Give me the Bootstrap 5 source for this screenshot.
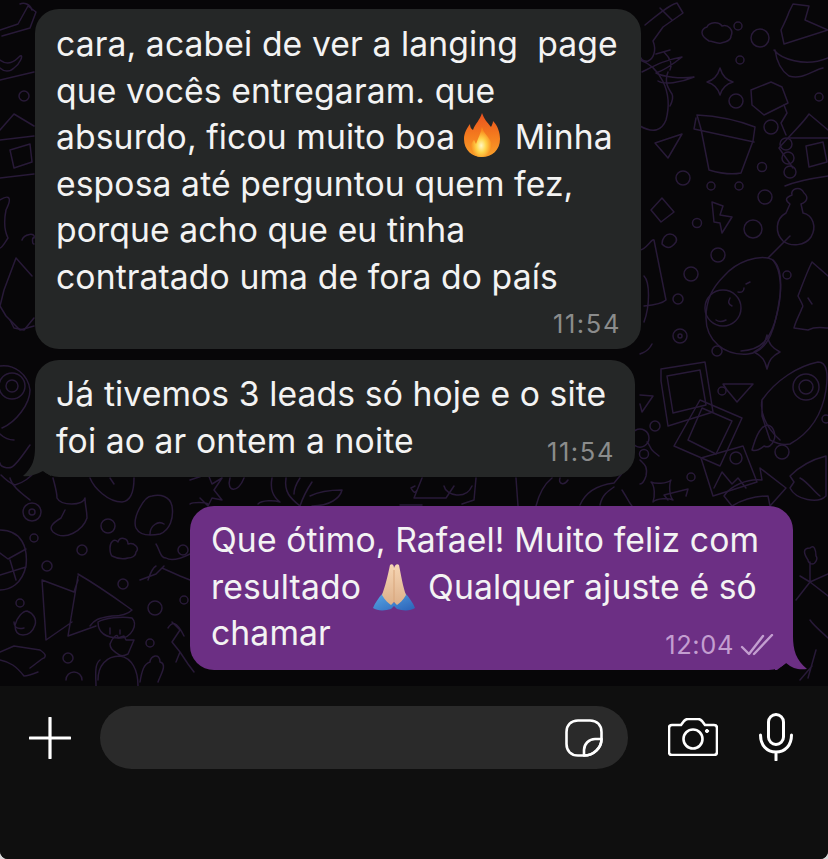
<!DOCTYPE html>
<html lang="pt-BR">
<head>
<meta charset="utf-8">
<title>Conversa</title>
<link href="https://cdn.jsdelivr.net/npm/bootstrap@5.3.0/dist/css/bootstrap.min.css" rel="stylesheet">
<style>
html,body{height:859px;overflow:hidden;background:#d8d8d8;}
.wa-app{width:828px;height:859px;background:#070608;border-radius:0 0 8px 8px;overflow:hidden;font-family:Inter,"Liberation Sans",sans-serif;}
.wa-chat{height:686px;position:relative;padding-top:9px;}
.wa-doodle{position:absolute;left:0;top:0;width:828px;height:686px;fill:none;stroke:#281a38;stroke-width:1.5;stroke-linejoin:round;stroke-linecap:round;}
.wa-bubble{position:relative;color:#f3f3f3;font-size:33.7px;line-height:46.6px;letter-spacing:.1px;white-space:pre;border-radius:24px;}
.wa-in{background:#252727;margin-left:35px;padding-left:21px;}
.wa-one{width:606px;height:340px;padding-top:12px;}
.wa-two{width:600px;height:117px;margin-top:11px;padding-top:11px;}
.wa-out{background:#6c2f84;margin-left:190px;margin-top:29px;width:603px;height:164px;padding-left:21px;padding-top:11px;}
.wa-time{position:absolute;font-size:25.5px;line-height:28px;letter-spacing:1.6px;color:#8b8c8c;}
.wa-one .wa-time{right:20px;bottom:11px;}
.wa-two .wa-time{right:20px;bottom:11px;}
.wa-out .wa-time{right:59px;bottom:11px;color:#c39ed0;letter-spacing:.6px;}
.wa-checks{position:absolute;right:19px;bottom:14px;}
.wa-tail{position:absolute;bottom:0;}
.wa-tail-l{left:-12px;}
.wa-tail-r{right:-14px;}
.wa-fire{vertical-align:4px;margin:-12px 5px -12px 9px;}
.wa-hands{vertical-align:0;margin:-12px 3px -12px 2px;}
.wa-bar{height:173px;background:#0f0f0f;padding:20px 0 0 29px;}
.wa-pill{width:528px;height:63px;background:#2a2a2a;border-radius:32px;margin-left:29px;padding:13px 25px 0 0;}
.wa-plus{margin-top:11px;}
.wa-cam{margin-left:40px;margin-top:12px;}
.wa-mic{margin-left:41px;margin-top:7px;}
.wa-ico{fill:none;stroke:#fff;stroke-linecap:round;stroke-linejoin:round;flex:none;display:block;}
</style>
</head>
<body class="m-0">
<div class="wa-app d-flex flex-column">
  <div class="wa-chat">
    <svg class="wa-doodle" viewBox="0 0 828 686" aria-hidden="true">
      <g>
        <circle cx="738" cy="26" r="4"/><circle cx="760" cy="38" r="9"/><circle cx="740" cy="60" r="4"/><circle cx="736" cy="101" r="7"/><circle cx="771" cy="127" r="7"/><circle cx="819" cy="97" r="4"/><circle cx="762" cy="167" r="4.5"/><circle cx="683" cy="178" r="7"/><circle cx="711" cy="186" r="4"/><circle cx="739" cy="186" r="4"/><circle cx="765" cy="197" r="7"/><circle cx="697" cy="223" r="4.5"/><circle cx="753" cy="229" r="9"/>
        <circle cx="718" cy="255" r="7"/><circle cx="691" cy="274" r="7"/><circle cx="678" cy="299" r="5"/><circle cx="680" cy="336" r="7"/><circle cx="680" cy="336" r="2"/><circle cx="717" cy="351" r="5"/><circle cx="787" cy="275" r="4"/><circle cx="722" cy="391" r="4"/><circle cx="655" cy="426" r="5"/><circle cx="644" cy="454" r="4.5"/><circle cx="691" cy="477" r="4"/><circle cx="782" cy="452" r="7"/><circle cx="826" cy="419" r="4"/>
        <circle cx="32" cy="512" r="9"/><circle cx="32" cy="512" r="3"/><circle cx="108" cy="526" r="7"/><circle cx="34" cy="538" r="4"/><circle cx="82" cy="550" r="5"/><circle cx="47" cy="566" r="5"/><circle cx="123" cy="584" r="5"/><circle cx="20" cy="603" r="4"/><circle cx="155" cy="608" r="7"/><circle cx="183" cy="550" r="5"/><circle cx="184" cy="600" r="4"/><circle cx="150" cy="643" r="4"/><circle cx="68" cy="658" r="5"/>
        <circle cx="12" cy="386" r="13"/><circle cx="12" cy="386" r="6"/><circle cx="24" cy="96" r="5"/>
      </g>
      <path d="M645 25c12-10 24-20 32-22l6 10-20 14-10 14c4 10 0 18-5 20-5 1-8-2-8-6"/>
      <path d="M660 8l12 12M670 50l-14 4"/>
      <path d="M664 52c8 8 8 14 6 18M642 72c12-6 22-12 40-15-10 8-20 14-26 16 8 4 24 6 38 4-14 6-30 8-36 4"/>
      <path d="M640 60c18 6 34 30 26 60-4 10-12 14-26 6"/>
      <path d="M668 72c-4 10 0 16 4 22 2 4 0 8-2 12"/>
      <path d="M715 44c-10-6-8-12-2-14 2-5 12-6 15-1 6-2 12 4 9 10 0 5-6 6-10 7-5 1-8-2-12-2z" transform="translate(-6 -3)"/>
      <path d="M720 68c2 7 6 12 13 14-7 2-11 6-13 13-2-7-6-11-13-13 7-2 11-7 13-14z"/>
      <path d="M756 90l20-8 11 5 6 16-24 12-12-10z" transform="translate(-5 0)"/>
      <path d="M697 115c20 1 40 5 58 12l-2 14-12 32c-10 2-22 0-32-3l-8-41z M696 118l-2 11 60 13"/>
      <path d="M655 143l27-9-14 24z"/>
      <path d="M781 30c4-8 6-12 8-18l4-8 16 2-4 14 23 10-44 14z"/>
      <path d="M775 50c2 14 8 22 14 26 14 4 24-6 34-8 M774 50c6 8 30 18 54 8"/>
      <path d="M779 148c14-16 25-26 30-34l19 16M786 135l-5-12 6-10-3-8M779 148l14 20 M790 138h38 M785 186c14-6 29-8 43-10"/>
      <circle cx="786" cy="144" r="6"/><circle cx="788" cy="158" r="6"/><circle cx="790" cy="172" r="6"/>
      <path d="M806 146l17-4 4 20-18 5z"/>
      <path d="M662 198l12 14-13 10-10-12z"/>
      <path d="M712 202l11 4-3 9 12 2-10 16-2-10-6-1z"/>
      <path d="M792 195c-2-6 8-10 12-2 5 4 3 9-3 11l2 9c10 2 14 14 8 24-6 9-20 10-28 4-8-8-8-22 3-28l4-9c-4-3-6-6 2-9z"/>
      <path d="M640 250c6 0 12-12 14-10l12 60c-3 3-12 5-22 6M644 276c6 6 6 30 0 46"/>
      <path d="M662 244c4 4 8 6 14-2 2-4-2-8-6-8-4 0-8 4-8 10z"/>
      <path d="M768 258c-10-2-30 2-44 18-12 12-18 24-18 42 0 22 18 38 42 36 22-2 28-30 32-58 2-18 0-36-12-38z"/>
      <path d="M773 260c8 10 10 30 4 54-6 26-16 36-36 37"/>
      <circle cx="723" cy="308" r="18"/><path d="M730 298c-2 4-2 6 2 8M716 320c3 2 6 2 10 0M738 292c4 1 6-1 6-4M746 284l4-2"/>
      <path d="M768 258l22-22"/>
      <path d="M812 262c-6 12-10 24-14 34 4 8 6 10 4 12-2 6-6 12-8 20l14 2c8-4 14-2 20-2M812 262l16 14M808 298l4 6"/>
      <path d="M767 335c2 9 5 13 13 17-8 4-11 8-13 17-2-9-5-13-13-17 8-4 11-8 13-17z"/>
      <path d="M640 354c4-2 8-2 12-10M640 395l13 1-11 16-2-8"/>
      <path d="M661 369l44-7 8 50-45 14-7-45z M667 376l33-6 6 35-33 8z"/>
      <path d="M700 400l42 18-22 48-46-20z M702 408l30 13-16 33-28-14z"/>
      <path d="M730 382l-4-6 30 0-16 18z" transform="translate(-3 8)"/>
      <path d="M701 458c14-4 28-8 42-12l14 36-44 14z"/>
      <circle cx="736" cy="458" r="6"/><path d="M714 488l8-16 10 12 6-6 8 10"/>
      <path d="M724 496c6-10 24-18 38-16l-2-12 26 20-16 18-2-10c-14 0-26 4-36 10z"/>
      <path d="M762 400c14-20 36-34 56-38 10 0 10 14 8 28-4 26-18 44-36 54-10 2-16-2-20-4l-8-24z M762 400c-2 10 2 26 18 40"/>
      <circle cx="806" cy="387" r="13"/><circle cx="806" cy="387" r="7"/>
      <path d="M762 428c-6 6-8 16-10 22 4 2 10-2 12-4 4 2 8 0 10-6 2-4 0-12-4-14-2-2-6 0-8 2z"/>
      <path d="M790 476c8-8 20-16 36-20v40c-8 8-30 4-36-8l4-6z M800 478c8 4 14 14 20 18"/>
      <path d="M647 442c3 2 2 6 7 10l5 4 M649 438a9 9 0 1 0 0 .1"/>
      <path d="M651 482c4 2 16 2 20-2-2 4-2 16 2 20-4-2-16-2-20 2 2-6 2-16-2-20z"/>
      <path d="M668 500l-4-5 24-6-2 7"/>
      <path d="M0 30l18-6 10-18 8 6-6 16-28 8M20 4c4-2 10 0 12 6"/>
      <path d="M0 60c8 6 14 2 20-4 4-2 0 8-6 12-4 4-10 4-14 0M0 80l34-8"/>
      <path d="M0 130l14-16 20 12M0 140l34-4M10 150l20-6 2 18-18 6zM0 178l34-4"/>
      <path d="M0 200c6-4 14-6 6 10-2 10-2 20 2 28-4 6-6 10-8 10M22 240c2-6 14-8 12-2-2-2-2 6 0 6"/>
      <path d="M16 258l-12 32-4 16 6 10 14 14 14-4M16 258l16 18"/>
      <path d="M34 318l-10 12-10-2-4-8"/>
      <path d="M0 366c14-2 28 8 30 24 0 14-14 32-28 38"/>
      <path d="M30 445c-6 8-12 18-18 22-4 2-12 0-12-4M0 434c4 4 10 6 14 6M10 478c2 8 10 14 20 22"/>
      <path d="M35 471c-4 6-12 12-20 14-6-2-10-6-14-10"/>
      <path d="M53 478c2 8 4 14 4 20 4 8 26 8 28 0 0 8 2 12 2 20-4 12-22 24-34 14-4-4-2-8 8-14l4-8"/>
      <path d="M90 478c4 10 18 24 32 24 10-1 12-12 12-24M110 478l4 6"/>
      <path d="M152 496c8-2 18 0 20 10 2 12-2 24-12 28-10 2-20 2-24-6-4-10 8-32 16-32z M150 534c0-8 8-14 14-10"/>
      <path d="M110 548c0-6 4-10 8-6 2-6 10-4 10 2 6-2 12 4 8 8 0 4-4 6-8 6-6 2-12 0-16-2-2-2-2-6-2-8z"/>
      <path d="M156 544c4 6 4 14 10 14 6 4 16 0 24-4M148 580c2-6 4-12 8-14M140 580l16-6 8-8M162 568l18 8 10 4"/>
      <path d="M0 530c22 0 28 18 26 36-4 18-16 24-26 24M0 553l8 6 18-10M10 560l6 20M0 575l26-8"/>
      <path d="M42 580l32 12 4-12M42 580l4 60 26-18 M78 576l-10 60 28-10 M78 574c24 14 40 26 54 36-4 4-10 6-20 6-14 2-18 4-22 10M98 622c6-4 24-6 34-4 6 6 0 20-12 20-10 0-22-2-22-16z M110 628v6M120 630v4"/>
      <path d="M15 625c2-8 8-14 12-14 6 2 10 8 8 14-2 6-6 10-12 10-6 0-8-4-8-10z M14 622c0 4 2 8 10 6"/>
      <path d="M0 652l14-6 26 4c6 4 6 6 4 8-2 0-8 6-14 10M0 660c10 2 16 6 24 16 2 0 4 0 14-4"/>
      <path d="M98 680c0-14 8-24 22-24 12 2 18 14 18 30M110 644c2-6 8-12 8-6l6-2 2 4 8 0-6 14c-4 2-8 2-10 0-6-4-8-6-8-10zM100 660c-6 4-4 18-4 26"/>
      <path d="M140 682c2-12 4-18 10-20 0-6 10-10 10 0 8 2 0 14-2 20M66 680a8 8 0 0 1 16 0"/>
      <path d="M172 622l8 8-8 12 8 10-4 10M168 628c4-6 8-8 16 8M180 652l8 12 6 8"/>
      <path d="M190 480l18-6 4 10 10-6-8 12 8 10-10-2-4 8-8-8M190 504c2-2 16-2 18 0M230 478c-4 14 8 16 14 0"/>
      <path d="M272 478c-2 10 0 18 8 24-6-2-18-2-22 2M286 478c-2 14 4 20 14 28 4-12 8-18 12-24 M300 478c-4 6-6 12-6 16M310 496c8-4 22-6 32-6-2 8-12 16-30 16"/>
      <path d="M415 486l-4 2c2 4 4 6 6 2 M422 478l-8 20h32l8-12 M444 486c2 10 22 14 28 0 M400 505h22M476 478l-2 22-12 4 M516 478l2 28M552 478c-10 8-14 20-16 28 M560 478c-2 6 4 8 8 2 M580 505c6-14 18-20 34-22l10-12M622 490c4 6 8 14 10 16 M600 505c2-10 8-14 14-18"/>
      <path d="M640 460c4 4 8 6 6 16-2 6-4 8-6 8"/>
      <path d="M808 560c-4-6-6-12 2-12 4-4 6 2 6 8 2 2 0 8-4 8-2 0-4-2-4-4z M810 562v20M796 600l14-18 18 14M810 582l-10-6M810 582l18-8"/>
      <path d="M810 620c4 6 14 14 18 18M816 650l-8 28M800 680l12-14"/>
    </svg>

    <div class="wa-bubble wa-in wa-one">cara, acabei de ver a langing  page
que vocês entregaram. que
absurdo, ficou muito boa<svg class="wa-fire" width="36" height="44" viewBox="0 0 36 44" aria-hidden="true"><defs><linearGradient id="wf" x1="0" y1="0" x2="0" y2="1"><stop offset="0" stop-color="#e8501f"/><stop offset=".5" stop-color="#f47a1e"/><stop offset="1" stop-color="#f9a02a"/></linearGradient><radialGradient id="wg" cx=".5" cy=".62" r=".5"><stop offset="0" stop-color="#fff6c4"/><stop offset=".45" stop-color="#ffd64d"/><stop offset="1" stop-color="#f98a1c"/></radialGradient></defs><path fill="url(#wf)" d="M18 0c2 6 5 9 9 14 1-2 2-4 2-6 5 5 7 12 7 18 0 11-8 18-18 18S0 37 0 26c0-6 3-11 6-15 0 3 1 5 3 6 2-6 7-10 9-17z"/><path fill="url(#wg)" d="M18 14c1 5 5 8 8 13 2 3 2 6 1 9-2 5-6 8-10 8s-9-3-10-8c-1-4 1-7 3-9 1 1 1 3 2 4 2-6 5-11 6-17z"/></svg> Minha
esposa até perguntou quem fez,
porque acho que eu tinha
contratado uma de fora do país<span class="wa-time">11:54</span></div>

    <div class="wa-bubble wa-in wa-two">Já tivemos 3 leads só hoje e o site
foi ao ar ontem a noite<span class="wa-time">11:54</span><svg class="wa-tail wa-tail-l" width="28" height="30" viewBox="0 0 28 30" aria-hidden="true"><path fill="#252727" d="M12 0c0 12-2 20-12 29 6 1 12-1 20-5l8 5V0z"/></svg></div>

    <div class="wa-bubble wa-out">Que ótimo, Rafael! Muito feliz com
resultado <svg class="wa-hands" width="43" height="47" viewBox="0 0 43 47" aria-hidden="true"><defs><linearGradient id="wh" x1="0" y1="0" x2="0" y2="1"><stop offset="0" stop-color="#f7d6b4"/><stop offset="1" stop-color="#dcb08a"/></linearGradient><linearGradient id="ws" x1="0" y1="0" x2="1" y2="1"><stop offset="0" stop-color="#5aa8e6"/><stop offset="1" stop-color="#2a62b8"/></linearGradient></defs><path fill="url(#ws)" d="M10 29c-4 4-8 10-10 15 4 3 12 3 18 1l3-3 3 3c6 2 14 2 18-1-2-5-6-11-10-15l-6 6-5 4-5-4z"/><path fill="url(#wh)" d="M17 1c2-2 4 0 4 3v34l-3 3c-3-2-6-5-9-10 3-8 6-20 8-30z"/><path fill="url(#wh)" d="M26 1c-2-2-4 0-5 3v34l3 3c3-2 6-5 9-10-3-8-5-20-7-30z"/><path stroke="#d9a67c" stroke-width="1" d="M21 6v32"/></svg> Qualquer ajuste é só
chamar<span class="wa-time">12:04</span><svg class="wa-checks" width="34" height="22" viewBox="0 0 34 22" fill="none" stroke="#c39ed0" stroke-width="2.4" stroke-linecap="round" stroke-linejoin="round" aria-hidden="true"><path d="M2 13l7 7L23 2M14 20L32 1"/></svg><svg class="wa-tail wa-tail-r" width="32" height="34" viewBox="0 0 32 34" aria-hidden="true"><path fill="#6c2f84" d="M18 0c0 14 3 24 14 33-8 1-14 0-21-6l-9 7H0V0z"/></svg></div>
  </div>

  <div class="wa-bar d-flex align-items-start">
    <svg class="wa-ico wa-plus" width="42" height="42" viewBox="0 0 42 42" stroke-width="3.2" aria-label="Adicionar"><path d="M21 1v40M1 21h40"/></svg>
    <div class="wa-pill d-flex justify-content-end align-items-start">
      <svg class="wa-ico" width="38" height="38" viewBox="0 0 38 38" stroke-width="2.6" aria-label="Figurinha"><path d="M13 1.5h12c7 0 11.500 4.500 11.500 11.500v7C36.500 29 29 36.500 19 36.500h-6C6 36.500 1.500 32 1.500 25V13C1.500 6 6 1.500 13 1.500z"/><path d="M36.500 20H30c-6 0-11 5-11 11v5.500c9 0 17.500-7.500 17.500-16.500z"/></svg>
    </div>
    <svg class="wa-ico wa-cam" width="50" height="38" viewBox="0 0 50 38" stroke-width="2.6" aria-label="Câmera"><path d="M4 7h9l3-4c1-1 2-2 4-2h10c2 0 3 1 4 2l3 4h9c2 0 3 1 3 3v24c0 2-1 3-3 3H4c-2 0-3-1-3-3V10c0-2 1-3 3-3z"/><circle cx="25" cy="21" r="9.500"/><circle cx="39" cy="13" r="1.600" fill="#fff" stroke-width="1"/></svg>
    <svg class="wa-ico wa-mic" width="34" height="48" viewBox="0 0 34 48" stroke-width="3" aria-label="Microfone"><rect x="9.500" y="1.500" width="15" height="30" rx="7.500"/><path d="M1.500 22c0 10 6 17 15.500 17s15.500-7 15.500-17M17 39v8"/></svg>
  </div>
</div>
</body>
</html>
